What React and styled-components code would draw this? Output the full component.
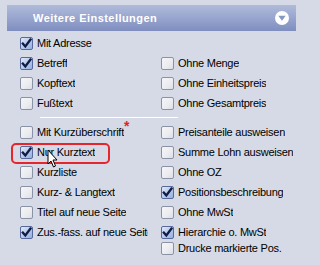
import React from "react";
import styled, { createGlobalStyle } from "styled-components";

const Global = createGlobalStyle`
  html, body { margin: 0; padding: 0; background: #d5dae6; }
  * { box-sizing: border-box; }
`;

const Panel = styled.div`
  width: 301px;
  height: 265px;
  background: #d5dae6;
  padding: 5px 5px 0 7px;
  font-family: "Liberation Sans", Arial, sans-serif;
  overflow: hidden;
  position: relative;
`;

const Header = styled.div`
  height: 26px;
  display: flex;
  align-items: center;
  justify-content: space-between;
  padding: 0 6px 0 26px;
  background: linear-gradient(to bottom, #b0bbda 0%, #98a5ce 50%, #7f8ebf 100%);
`;

const Title = styled.span`
  color: #ffffff;
  font-weight: bold;
  font-size: 11px;
  letter-spacing: 0.45px;
`;

const Body = styled.div`
  padding: 2px 0 0 13px;
`;

const Section = styled.div`
  display: grid;
  grid-template-columns: 136px 1fr;
  column-gap: 5px;
`;

const Column = styled.div`
  display: flex;
  flex-direction: column;
  padding-top: ${(p) => (p.$offset ? `${p.$offset}px` : "0")};
`;

const Row = styled.div`
  position: relative;
  height: 20px;
  display: flex;
  align-items: center;
  gap: 4px;
  margin-top: ${(p) => (p.$tight ? "-4px" : "0")};
  white-space: nowrap;
`;

const Label = styled.span`
  font-size: 11px;
  letter-spacing: -0.25px;
  color: #000000;
  overflow: hidden;
  white-space: nowrap;
  max-width: ${(p) => (p.$clip ? "111px" : "none")};
`;

const Box = styled.span`
  width: 13px;
  height: 13px;
  flex: 0 0 13px;
  border: 1px solid ${(p) => (p.$checked ? "#56699a" : "#8a93a6")};
  border-radius: 2px;
  background: ${(p) =>
    p.$checked
      ? "linear-gradient(135deg, #e2eaf8 0%, #b0c5ea 60%, #96b1e0 100%)"
      : "linear-gradient(135deg, #f6f6f8 0%, #ebecf0 60%, #dcdee5 100%)"};
  display: flex;
  align-items: center;
  justify-content: center;
`;

const Separator = styled.div`
  margin: 4px 0 4px 20px;
  width: 138px;
  height: 1px;
  background: #ffffff;
`;

const Star = styled.span`
  color: #e52222;
  font-weight: bold;
  font-size: 14px;
  position: relative;
  top: -6px;
  margin-left: -4px;
`;

const Highlight = styled.div`
  position: absolute;
  left: -9px;
  top: 1px;
  width: 99px;
  height: 21px;
  border: 2.5px solid #e5262c;
  border-radius: 5px;
  pointer-events: none;
`;

const Cursor = styled.svg`
  position: absolute;
  left: 27px;
  top: 7px;
  pointer-events: none;
`;

const Check = () => (
  <svg width="11" height="11" viewBox="0 0 11 11">
    <path d="M1.8 5.6 L4.3 8.4 L9.4 1.6" fill="none" stroke="#111c46" strokeWidth="2.3" strokeLinecap="square" />
  </svg>
);

const Item = ({ label, checked, tight, clip, children }) => (
  <Row $tight={tight}>
    <Box $checked={checked}>{checked && <Check />}</Box>
    <Label $clip={clip}>{label}</Label>
    {children}
  </Row>
);

export default function App() {
  return (
    <>
      <Global />
      <Panel>
        <Header>
          <Title>Weitere Einstellungen</Title>
          <svg width="16" height="16" viewBox="0 0 16 16">
            <circle cx="8" cy="8" r="7" fill="#ffffff" />
            <path d="M4.3 5.8 L11.7 5.8 L8 10.8 Z" fill="#8797c4" />
          </svg>
        </Header>
        <Body>
          <Section>
            <Column>
              <Item label="Mit Adresse" checked />
              <Item label="Betreff" checked />
              <Item label="Kopftext" />
              <Item label="Fußtext" />
            </Column>
            <Column $offset={20}>
              <Item label="Ohne Menge" />
              <Item label="Ohne Einheitspreis" />
              <Item label="Ohne Gesamtpreis" />
            </Column>
          </Section>
          <Separator />
          <Section>
            <Column>
              <Item label="Mit Kurzüberschrift">
                <Star>*</Star>
              </Item>
              <Item label="Nur Kurztext" checked>
                <Highlight />
                <Cursor width="12" height="22" viewBox="0 0 12 22">
                  <path d="M1 1 L1 15 L4 12 L6.5 18 L8.5 17 L6 11 L10 11 Z" fill="#ffffff" stroke="#000000" strokeWidth="1" strokeLinejoin="miter" />
                </Cursor>
              </Item>
              <Item label="Kurzliste" />
              <Item label="Kurz- & Langtext" />
              <Item label="Titel auf neue Seite" />
              <Item label="Zus.-fass. auf neue Seite" checked clip />
            </Column>
            <Column>
              <Item label="Preisanteile ausweisen" />
              <Item label="Summe Lohn ausweisen" />
              <Item label="Ohne OZ" />
              <Item label="Positionsbeschreibung" checked />
              <Item label="Ohne MwSt" />
              <Item label="Hierarchie o. MwSt" checked />
              <Item label="Drucke markierte Pos." tight />
            </Column>
          </Section>
        </Body>
      </Panel>
    </>
  );
}
